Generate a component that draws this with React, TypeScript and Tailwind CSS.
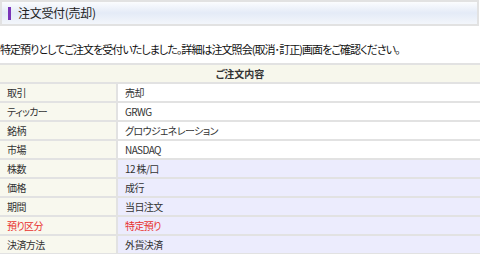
import { FC } from "react";

type Row = { label: string; value: string; tone: "white" | "blue"; red?: boolean };

const rows: Row[] = [
  { label: "取引", value: "売却", tone: "white" },
  { label: "ティッカー", value: "GRWG", tone: "white" },
  { label: "銘柄", value: "グロウジェネレーション", tone: "white" },
  { label: "市場", value: "NASDAQ", tone: "white" },
  { label: "株数", value: "12 株/口", tone: "blue" },
  { label: "価格", value: "成行", tone: "blue" },
  { label: "期間", value: "当日注文", tone: "blue" },
  { label: "預り区分", value: "特定預り", tone: "blue", red: true },
  { label: "決済方法", value: "外貨決済", tone: "blue" },
];

const font = "font-['Noto_Sans_CJK_JP','Noto_Sans',sans-serif] [font-feature-settings:'palt']";

const App: FC = () => {
  return (
    <div className={`w-[480px] h-[254px] overflow-hidden bg-white text-[#222] ${font}`}>
      {/* ページ見出し */}
      <div className="h-[26px] w-[479px] border-2 border-[#e2e2e2] bg-gradient-to-b from-[#fbfcfe] via-[#e4ebf7] to-[#f3f6fb] flex items-center pl-[6px]">
        <span className="w-[3px] h-[13px] bg-[#7a34b8] mr-[7px]" />
        <span className="text-[12px] leading-none tracking-[-0.3px]">注文受付(売却)</span>
      </div>

      {/* 完了メッセージ */}
      <p className="mt-[16px] h-[21px] text-[11px] leading-[14px] tracking-[-0.95px] text-[#111]">
        特定預りとしてご注文を受付いたしました。詳細は注文照会(取消･訂正)画面をご確認ください。
      </p>

      {/* 注文内容 */}
      <div className="border-t-2 border-[#e2e2e2] text-[10px] text-[#333]">
        <div className="h-[19px] bg-[#f7f7ec] border-b-2 border-[#e2e2e2] flex items-center justify-center font-semibold">
          ご注文内容
        </div>
        {rows.map((r) => (
          <div key={r.label} className="h-[19px] flex border-b-2 border-[#e2e2e2]">
            <div
              className={`w-[118px] bg-[#f8f8ee] border-r-2 border-[#e2e2e2] flex items-center pl-[7px] tracking-[-0.6px] ${
                r.red ? "text-[#e8322e]" : ""
              }`}
            >
              {r.label}
            </div>
            <div
              className={`flex-1 flex items-center pl-[7px] tracking-[-0.6px] ${
                r.tone === "blue" ? "bg-[#ececfd]" : "bg-white"
              } ${r.red ? "text-[#e8322e]" : ""}`}
            >
              {r.value}
            </div>
          </div>
        ))}
      </div>
    </div>
  );
};

export default App;
